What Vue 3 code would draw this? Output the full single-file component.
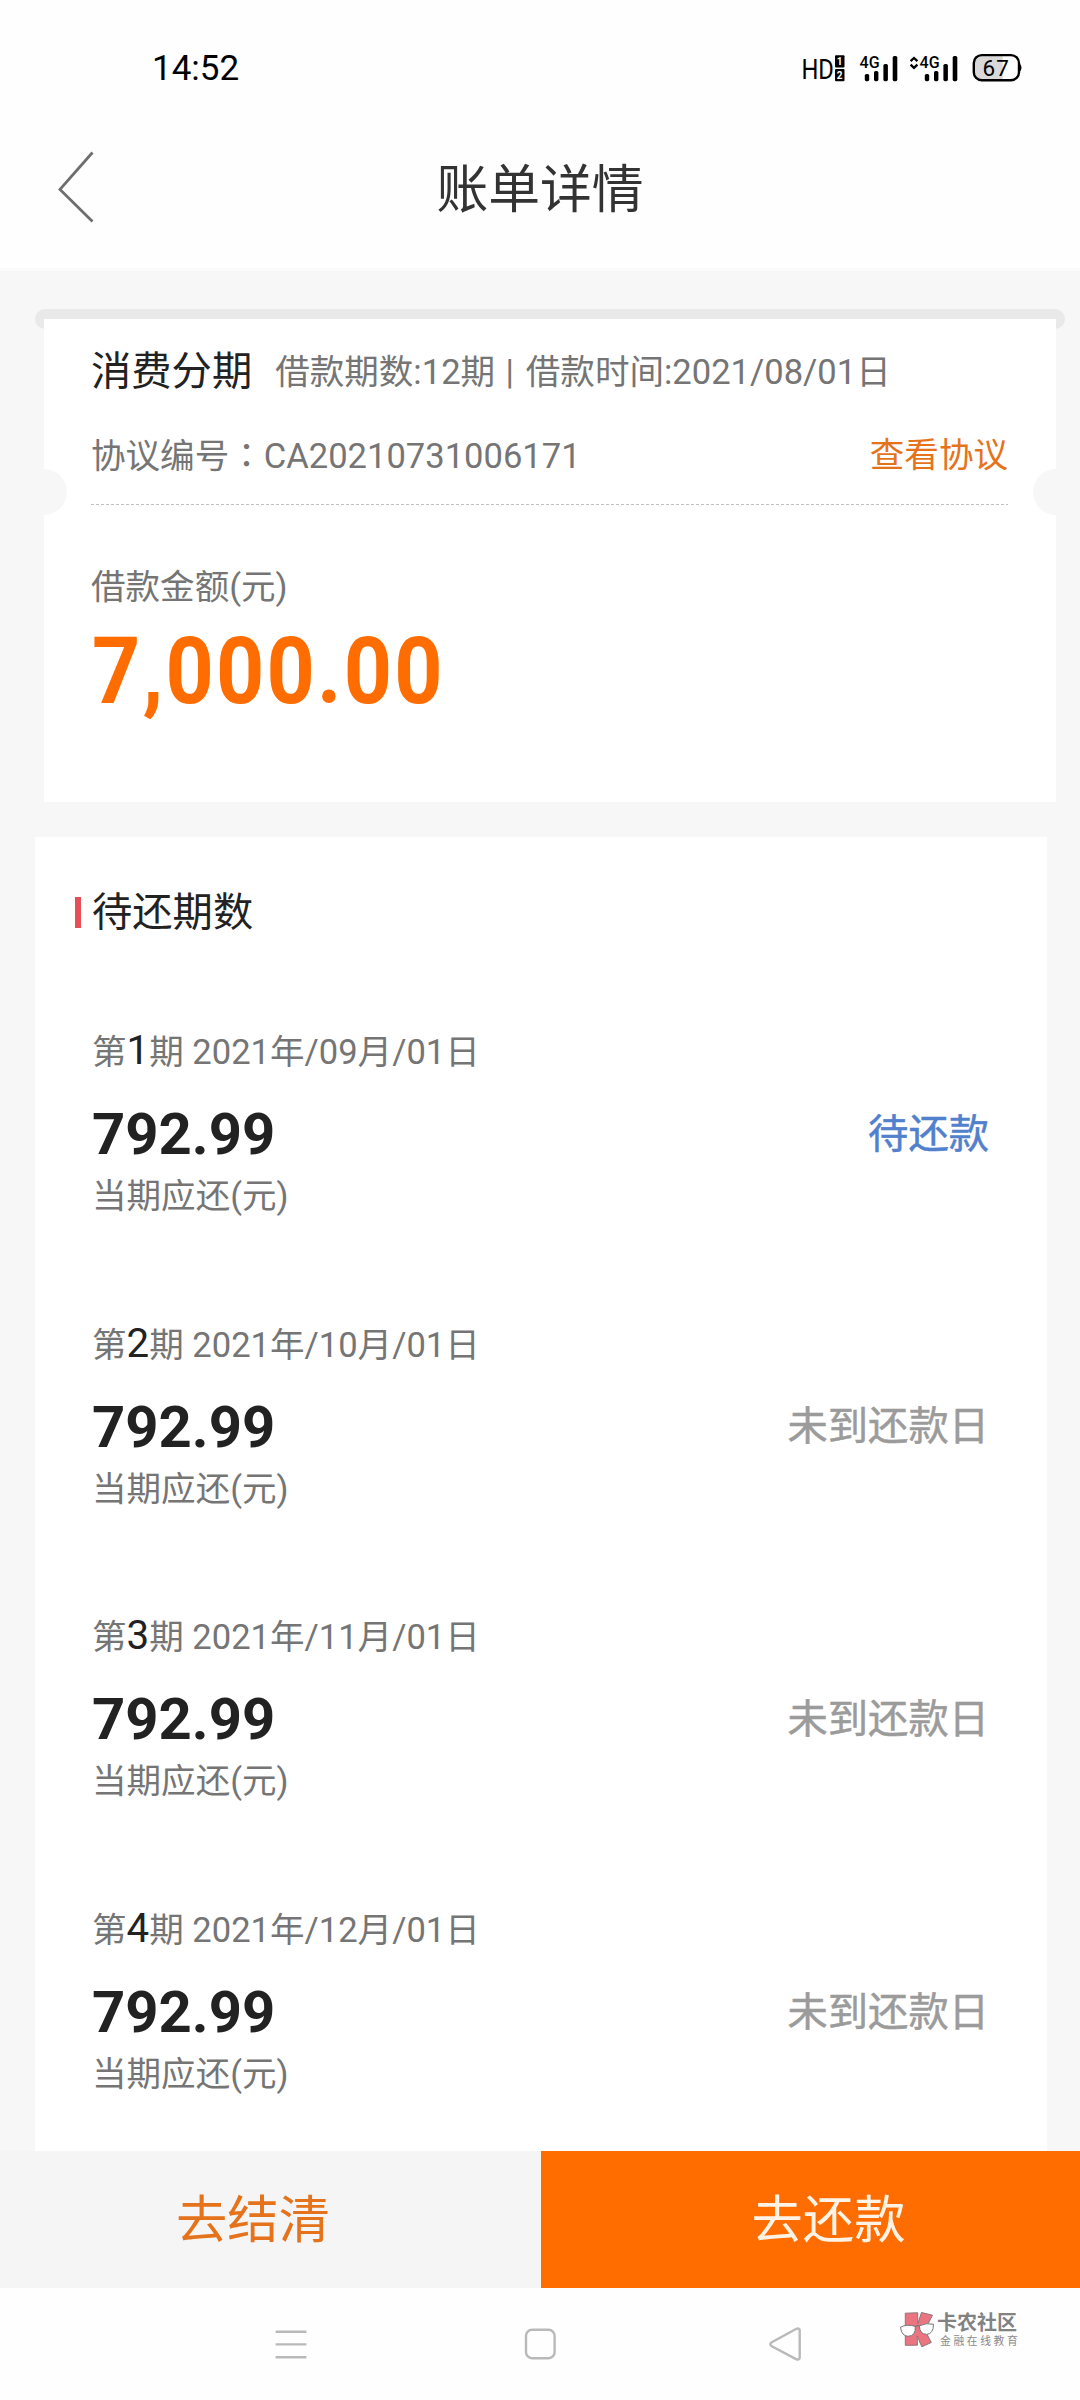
<script setup>
const periods = [
  { no: 1, date: '2021年/09月/01日', amount: '792.99', status: '待还款', due: true },
  { no: 2, date: '2021年/10月/01日', amount: '792.99', status: '未到还款日', due: false },
  { no: 3, date: '2021年/11月/01日', amount: '792.99', status: '未到还款日', due: false },
  { no: 4, date: '2021年/12月/01日', amount: '792.99', status: '未到还款日', due: false },
]
</script>

<template>
  <div class="screen">
    <header class="top">
      <div class="status-bar">
        <span class="clock">14:52</span>
        <svg class="status-icons" width="224" height="42" viewBox="799 46 224 42">
          <text x="801.4" y="78.6" font-size="27.5" textLength="32.5" lengthAdjust="spacingAndGlyphs">HD</text>
          <rect x="835" y="55.3" width="9.5" height="12.2" rx="1" />
          <rect x="835" y="69" width="9.5" height="12.2" rx="1" />
          <text class="inv" x="836.8" y="65" font-size="10">1</text>
          <text class="inv" x="836.8" y="78.8" font-size="10">2</text>
          <g v-for="dx in [0, 60]" :key="dx" :transform="`translate(${dx} 0)`">
            <text class="net" x="859.6" y="68.2" font-size="17" textLength="20" lengthAdjust="spacingAndGlyphs">4G</text>
            <rect x="864.8" y="74" width="4.4" height="7.2" rx="1.6" />
            <rect x="874" y="71" width="4.4" height="10.2" rx="1.6" />
            <rect x="883.4" y="64" width="4.5" height="17.2" rx="1.6" />
            <rect x="892.7" y="56" width="4.6" height="25.2" rx="1.6" />
          </g>
          <path d="M910.6 61.2L914 58l3.4 3.2M910.6 64.6l3.4 3.2l3.4-3.2" fill="none" stroke="#000" stroke-width="2.3" />
          <path d="M982 56.3H1002.7V79.3H982a7 7 0 0 1-7-7V63.3a7 7 0 0 1 7-7z" fill="#d9d9d9" />
          <rect x="973.8" y="55.1" width="45.2" height="25.2" rx="8" fill="none" stroke="#000" stroke-width="2.4" />
          <path d="M1019.5 63.5q2 1.5 2 4.3t-2 4.3z" />
          <text class="level" x="982.4" y="75.8" font-size="22.5" textLength="26.5">67</text>
        </svg>
      </div>
      <nav class="nav">
        <svg class="back" width="40" height="76" viewBox="57 151 40 76">
          <path d="M92.5 153.5L60 190.4L92.5 222.5" fill="none" stroke="#6e6e6e" stroke-width="2.8" />
        </svg>
        <h1 class="title">账单详情</h1>
      </nav>
    </header>

    <main class="body">
      <div class="slot"></div>
      <section class="bill">
        <div class="line summary">
          <strong>消费分期</strong>
          <span>借款期数:12期<i class="bar"> | </i>借款时间:2021/08/01日</span>
        </div>
        <div class="line contract">
          <span>协议编号<i class="colon">：</i>CA20210731006171</span>
          <a class="link">查看协议</a>
        </div>
        <div class="divider"></div>
        <div class="caption">借款金额(元)</div>
        <div class="total"><span>7,000.00</span></div>
      </section>

      <section class="list">
        <h2 class="list-title">待还期数</h2>
        <article v-for="p in periods" :key="p.no" class="period">
          <div class="period-head">第<b>{{ p.no }}</b>期 {{ p.date }}</div>
          <div class="period-main">
            <span class="amount">{{ p.amount }}</span>
            <span class="state" :class="{ due: p.due }">{{ p.status }}</span>
          </div>
          <div class="period-label">当期应还(元)</div>
        </article>
      </section>
    </main>

    <footer class="actions">
      <button class="btn settle">去结清</button>
      <button class="btn repay">去还款</button>
    </footer>

    <div class="system-nav">
      <svg class="keys" width="560" height="40" viewBox="260 2324 560 40" fill="none" stroke="#b9b9b9" stroke-width="2.4">
        <path d="M275.6 2331.7H306.4M275.6 2344.4H306.4M275.6 2357.3H306.4" />
        <rect x="526" y="2329.8" width="28.6" height="28.4" rx="6" />
        <path d="M796.5 2328.8L771.8 2342.2q-3 2 0 4L796.5 2359.3q3.2 1 3.2-2V2330.8q0-3-3.2-2z" />
      </svg>
      <div class="brand">
        <svg width="36" height="38" viewBox="0 0 36 38">
          <path d="M6.3 2.2L18.7 1.8L18.8 12.5L22.5 1.5L33.5 4.2L25.8 19L32.3 31.5L22.8 35.8L18.2 25L18.4 34.2L6.3 34.3z" fill="#ea7480" stroke="#8d7779" stroke-width="1" />
          <path d="M1.5 16.2Q8 12.7 16.3 15.4Q17 25 9 25.3Q2.5 25 1.5 16.2z" fill="#fff" stroke="#777" stroke-width="1" />
          <path d="M20.4 14.8Q27 11.5 34.5 13.2Q34.5 23 27.5 23.4Q20.5 23 20.4 14.8z" fill="#fff" stroke="#777" stroke-width="1" />
          <path d="M16.3 15.6Q18.5 14 20.4 15" fill="none" stroke="#777" stroke-width="1.3" />
        </svg>
        <div class="brand-text">
          <span class="brand-name">卡农社区</span>
          <span class="brand-sub">金融在线教育</span>
        </div>
      </div>
    </div>
  </div>
</template>

<style>
body {
  background: #fff;
}
</style>

<style scoped>
.screen {
  display: flex;
  flex-direction: column;
  width: 1080px;
  height: 2400px;
  overflow: hidden;
  background: #fff;
  font-family: Roboto, "Noto Sans CJK SC", sans-serif;
  font-size: 34.56px;
  color: #757575;
  white-space: nowrap;
}
.top {
  height: 268px;
  background: #fefefe;
  border-bottom: 3px solid #fafafa;
  flex: none;
}
.status-bar {
  display: flex;
  align-items: center;
  justify-content: space-between;
  height: 80px;
  padding: 27px 57px 0 152px;
}
.clock {
  margin-top: 4px;
  font-size: 35px;
  line-height: 40px;
  color: #000;
}
.status-icons text {
  font-family: Roboto, sans-serif;
}
.status-icons .inv {
  fill: #fff;
  font-weight: 700;
}
.status-icons .net {
  font-weight: 500;
}
.nav {
  display: grid;
  grid-template-columns: 97px 1fr 97px;
  align-items: center;
  height: 161px;
}
.back {
  justify-self: end;
}
.title {
  margin: 6px 0 0;
  text-align: center;
  font-size: 51.8px;
  font-weight: 400;
  line-height: 60px;
  color: #333;
}
.body {
  display: flex;
  flex-direction: column;
  height: 1880px;
  flex: none;
  overflow: hidden;
  background: #f7f7f7;
}
.slot {
  flex: none;
  height: 20px;
  margin: 38px 15px -10px 35px;
  border-radius: 10px;
  background: #e9e9e9;
}
.bill {
  position: relative;
  flex: none;
  box-sizing: border-box;
  height: 483px;
  margin: 0 24px 0 44px;
  padding: 23px 48px 0 47px;
  background: #fff;
}
.bill::before,
.bill::after {
  content: "";
  position: absolute;
  top: 150px;
  width: 23px;
  height: 46px;
  background: #f7f7f7;
}
.bill::before {
  left: 0;
  border-radius: 0 23px 23px 0;
}
.bill::after {
  right: 0;
  border-radius: 23px 0 0 23px;
}
.line {
  display: flex;
  align-items: center;
  height: 60px;
  line-height: 60px;
}
.summary {
  gap: 23px;
}
.summary strong {
  font-size: 40.3px;
  font-weight: 400;
  color: #222;
}
.bar {
  font-style: normal;
  letter-spacing: 1.7px;
}
.contract {
  margin-top: 22px;
  justify-content: space-between;
}
.colon {
  font-style: normal;
  font-family: "Noto Sans CJK TC", sans-serif;
}
.link {
  margin-top: 2px;
  color: #e5731c;
}
.divider {
  height: 1px;
  margin-top: 20px;
  background: repeating-linear-gradient(90deg, #bfbfbf 0 3px, #fff 3px 5px);
}
.caption {
  margin-top: 52px;
  line-height: 60px;
}
.total {
  margin-top: 14px;
  line-height: 80px;
  font-size: 93.5px;
  font-weight: 700;
  color: #ff6c00;
}
.total span {
  display: inline-block;
  margin-left: 1px;
  letter-spacing: 2.5px;
  transform: scaleX(0.9);
  transform-origin: 0 50%;
}
.list {
  flex: none;
  height: 1400px;
  margin: 35px 33px 0 35px;
  background: #fff;
}
.list-title {
  display: flex;
  align-items: center;
  gap: 11px;
  margin: 0;
  padding: 46px 0 78px 40px;
  font-size: 40.3px;
  font-weight: 400;
  line-height: 60px;
  color: #222;
}
.list-title::before {
  content: "";
  width: 6px;
  height: 31px;
  margin-top: -2px;
  background: #e64f55;
}
.period {
  height: 292.7px;
  padding: 0 58px 0 57px;
}
.period-head {
  height: 60px;
  line-height: 60px;
}
.period-head b {
  font-size: 40.3px;
  font-weight: 400;
  color: #222;
}
.period-main {
  display: flex;
  align-items: center;
  justify-content: space-between;
  height: 60px;
  margin-top: 23px;
  line-height: 60px;
}
.amount {
  font-size: 58px;
  font-weight: 700;
  color: #222;
}
.state {
  margin-top: 1px;
  font-size: 40.3px;
  color: #9b9b9b;
  -webkit-text-stroke: 0.5px currentColor;
}
.state.due {
  color: #5180cc;
}
.period-label {
  margin-top: 7px;
  line-height: 50px;
}
.actions {
  display: flex;
  flex: none;
  height: 137px;
}
.btn {
  box-sizing: border-box;
  border: 0;
  font-family: inherit;
  font-size: 51.3px;
  line-height: 60px;
}
.settle {
  width: 541px;
  padding: 2px 35px 0 0;
  background: #f5f5f5;
  color: #e5731c;
}
.repay {
  flex: 1;
  padding: 2px 0 0 36px;
  background: #ff6c00;
  color: #fff3e6;
}
.system-nav {
  display: flex;
  align-items: flex-start;
  flex: 1;
  padding-left: 260px;
  background: #fefefe;
}
.keys {
  flex: none;
  margin-top: 36px;
}
.brand {
  display: flex;
  margin: 23px 0 0 79px;
}
.brand-text {
  display: flex;
  flex-direction: column;
}
.brand-name {
  margin-left: 2px;
  font-size: 20px;
  font-weight: 700;
  line-height: 24px;
  color: #828282;
}
.brand-sub {
  margin-left: 5px;
  font-size: 10.8px;
  letter-spacing: 2.6px;
  line-height: 13px;
  color: #8a8a8a;
}
</style>
